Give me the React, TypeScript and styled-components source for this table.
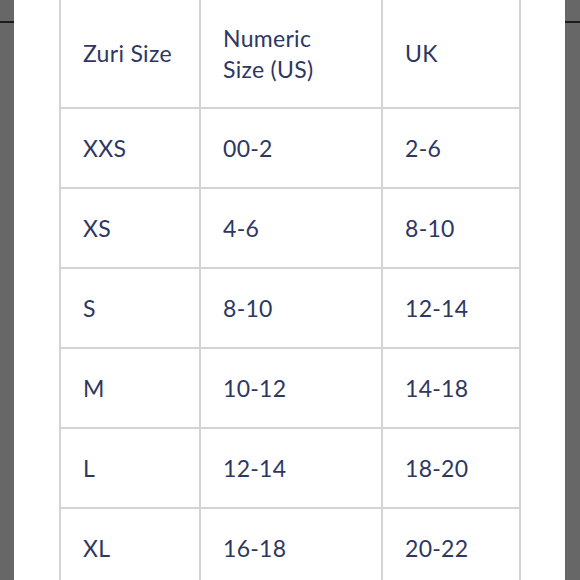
import React from "react";
import styled, { createGlobalStyle } from "styled-components";

const GlobalStyle = createGlobalStyle`
    html, body {
        margin: 0;
        padding: 0;
        background: #ffffff;
        overflow: hidden;
    }
    #root {
        height: 580px;
    }
`;

const Page = styled.div`
    display: flex;
    width: 580px;
    height: 580px;
    overflow: hidden;
    font-family: Lato, "Open Sans", sans-serif;
`;

const SideBar = styled.div<{ $width: number }>`
    flex: 0 0 ${(p) => p.$width}px;
    background: #676767;
    padding-top: 21px;
    box-sizing: border-box;
    &::before {
        content: "";
        display: block;
        height: 2px;
        background: #1c1c1c;
    }
`;

const Sheet = styled.div`
    flex: 1;
    background: #ffffff;
    padding-left: 45px;
    overflow: hidden;
`;

const Chart = styled.div`
    display: grid;
    grid-template-columns: 142px 182px 138px;
    grid-auto-rows: 80px;
    grid-template-rows: 109px;
`;

const Cell = styled.div<{ $first?: boolean }>`
    box-sizing: border-box;
    display: flex;
    align-items: center;
    padding-left: 22px;
    border-right: 2px solid #d4d4d4;
    border-bottom: 2px solid #d4d4d4;
    border-left: ${(p) => (p.$first ? "2px solid #d4d4d4" : "none")};
    color: #2d3762;
    font-size: 23px;
    font-weight: 400;
    line-height: 31px;
    letter-spacing: 0.3px;
`;

const header = ["Zuri Size", "Numeric\nSize (US)", "UK"];

const rows = [
    ["XXS", "00-2", "2-6"],
    ["XS", "4-6", "8-10"],
    ["S", "8-10", "12-14"],
    ["M", "10-12", "14-18"],
    ["L", "12-14", "18-20"],
    ["XL", "16-18", "20-22"],
];

const HeaderText = styled.span`
    white-space: pre-line;
`;

export default function App() {
    return (
        <>
            <GlobalStyle />
            <Page>
                <SideBar $width={14} />
                <Sheet>
                    <Chart>
                        {header.map((h, i) => (
                            <Cell key={h} $first={i === 0}>
                                <HeaderText>{h}</HeaderText>
                            </Cell>
                        ))}
                        {rows.map((r) =>
                            r.map((v, i) => (
                                <Cell key={r[0] + i} $first={i === 0}>
                                    {v}
                                </Cell>
                            ))
                        )}
                    </Chart>
                </Sheet>
                <SideBar $width={15} />
            </Page>
        </>
    );
}
